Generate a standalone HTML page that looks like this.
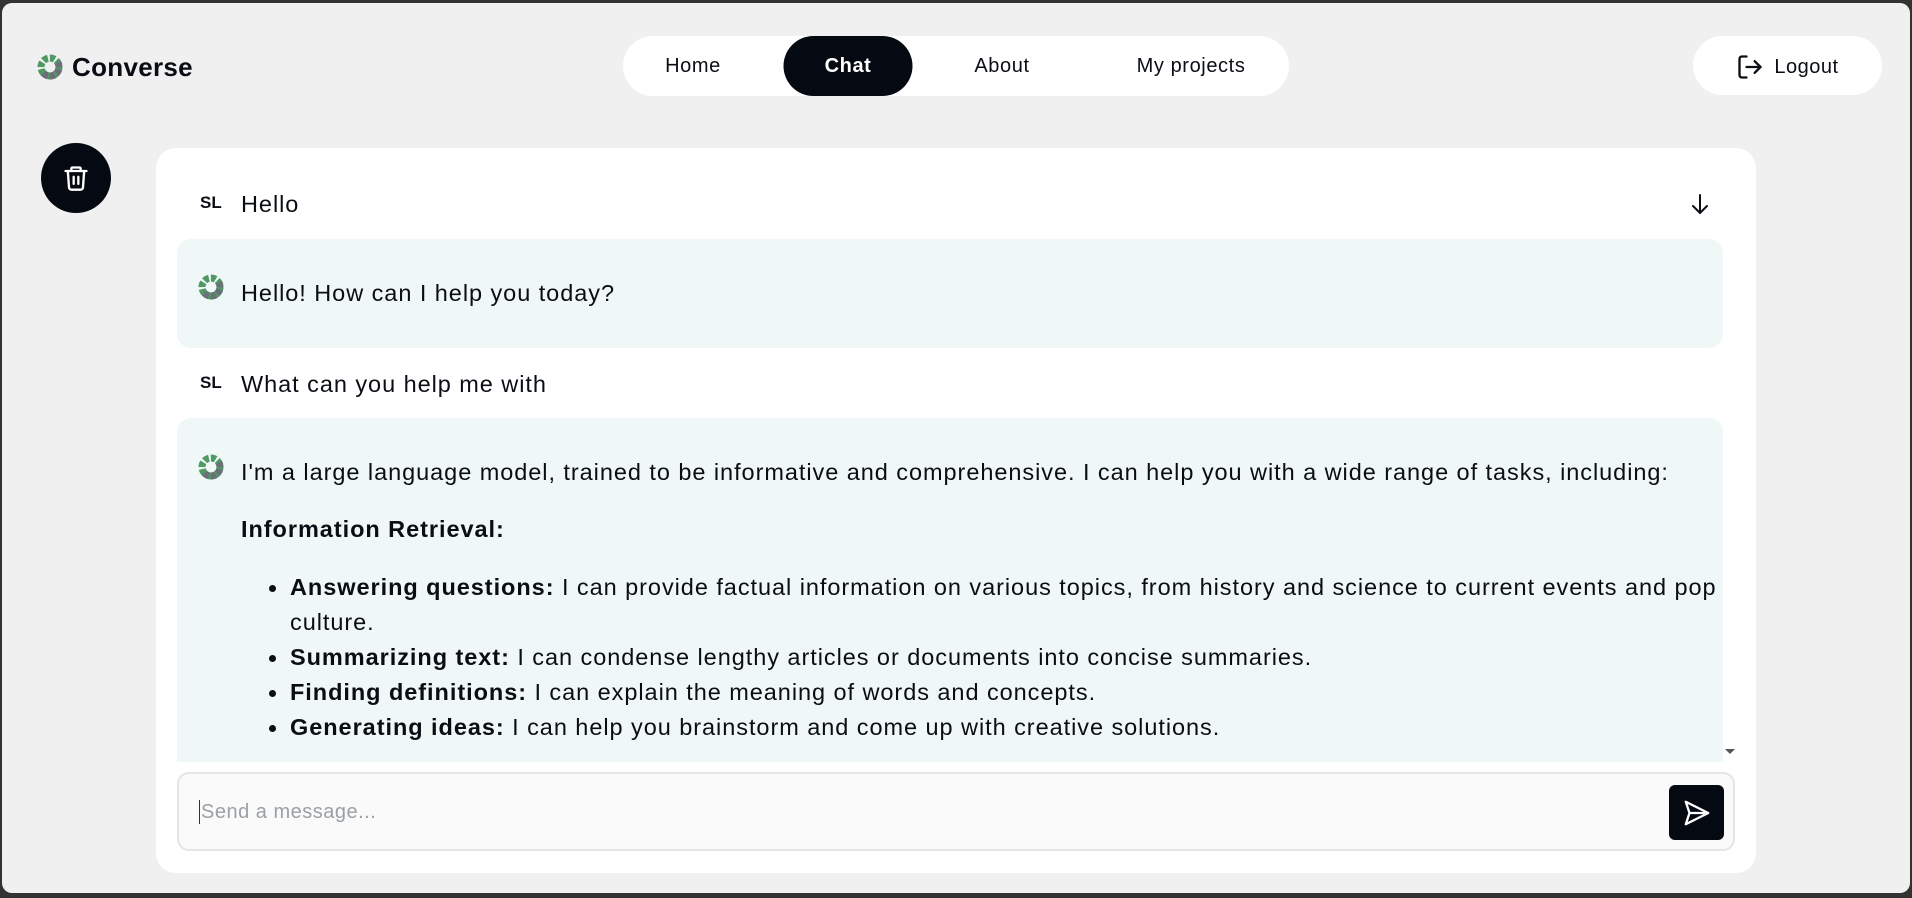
<!DOCTYPE html>
<html><head><meta charset="utf-8"><style>
*{box-sizing:border-box;margin:0;padding:0}
html,body{width:1912px;height:898px;overflow:hidden;background:#333}
body{font-family:"Liberation Sans",sans-serif;color:#0a0e14}
.frame{position:absolute;left:2px;top:3px;width:1908px;height:890px;background:#f0f0f0;border-radius:10px}
.logo{position:absolute;left:37px;top:52px;display:flex;align-items:center}
.logo span{font-weight:bold;font-size:26px;margin-left:8px;letter-spacing:0.3px}
.nav{position:absolute;left:623px;top:36px;width:666px;height:60px;background:#fff;border-radius:30px}
.nav div{position:absolute;top:0;height:60px;line-height:60px;font-size:20px;letter-spacing:0.6px;transform:translateX(-50%);white-space:nowrap}
.nav .act{background:#050a12;color:#fff;border-radius:30px;width:129px;text-align:center;font-weight:bold}
.logout{position:absolute;left:1693px;top:36px;width:189px;height:59px;background:#fff;border-radius:30px;display:flex;align-items:center;justify-content:center;font-size:20px;letter-spacing:0.5px;gap:10px;padding-top:3px}
.trash{position:absolute;left:41px;top:143px;width:70px;height:70px;border-radius:50%;background:#050a12;display:flex;align-items:center;justify-content:center}
.card{position:absolute;left:156px;top:148px;width:1600px;height:725px;background:#fff;border-radius:20px}
.msg{position:absolute;left:177px;width:1546px;font-size:23.5px;letter-spacing:0.95px}
.ai{background:#eff8f7;border-radius:14px}
.sl{position:absolute;left:23px;font-size:17px;font-weight:bold;letter-spacing:0}
.t{position:absolute;left:64px;white-space:nowrap}
.ico{position:absolute;left:21px}
ul{position:absolute;left:64px;list-style:none}
li{position:relative;padding-left:49px;line-height:35px;white-space:nowrap}
li:before{content:"";position:absolute;left:28px;top:15px;width:7px;height:7px;border-radius:50%;background:#0a0e14}
.input{position:absolute;left:177px;top:772px;width:1558px;height:79px;border:2px solid #e3e6e8;border-radius:12px;background:#fafafa}
.ph{position:absolute;left:20px;top:26px;font-size:20px;color:#9aa0a6;border-left:1.5px solid #333;padding-left:1px;line-height:24px;letter-spacing:0.5px}
.send{position:absolute;left:1669px;top:785px;width:55px;height:55px;background:#050a12;border-radius:6px;display:flex;align-items:center;justify-content:center}
</style></head><body>
<div class="frame"></div>
<svg width="0" height="0" style="position:absolute"><defs><g id="lg"><circle cx="13" cy="13" r="9" fill="none" stroke="#4f9a64" stroke-width="7" stroke-dasharray="5 2"/><path d="M13 4 A9 9 0 0 1 13 22" fill="none" stroke="#6b7078" stroke-width="7" stroke-dasharray="5 2" transform="rotate(60 13 13)"/></g></defs></svg>
<div class="logo"><svg width="27" height="27"><use href="#lg"/></svg><span>Converse</span></div>
<div class="nav">
<div style="left:70px">Home</div>
<div class="act" style="left:225px">Chat</div>
<div style="left:379px">About</div>
<div style="left:568px">My projects</div>
</div>
<div class="logout"><svg width="28" height="28" viewBox="0 0 24 24" fill="none" stroke="#0a0e14" stroke-width="2" stroke-linecap="round" stroke-linejoin="round"><path d="M9 21H5a2 2 0 0 1-2-2V5a2 2 0 0 1 2-2h4"/><path d="M16 17l5-5-5-5"/><path d="M21 12H9"/></svg>Logout</div>
<div class="trash"><svg width="28" height="30" viewBox="0 0 24 24" fill="none" stroke="#fff" stroke-width="2" stroke-linecap="round" stroke-linejoin="round"><path d="M3 6h18"/><path d="M8 6V4a1 1 0 0 1 1-1h6a1 1 0 0 1 1 1v2"/><path d="M5 6l1 14a2 2 0 0 0 2 2h8a2 2 0 0 0 2-2l1-14"/><path d="M10 11v6M14 11v6"/></svg></div>
<div class="card"></div>
<div class="msg" style="top:182px;height:46px"><div class="sl" style="top:11px">SL</div><div class="t" style="top:9px">Hello</div></div>
<svg style="position:absolute;left:1688px;top:192px" width="24" height="24" viewBox="0 0 24 24" fill="none" stroke="#0a0e14" stroke-width="2" stroke-linecap="round"><path d="M12 3v18M5 14l7 7 7-7"/></svg>
<div class="msg ai" style="top:239px;height:109px"><svg class="ico" style="top:35px" width="27" height="27"><use href="#lg"/></svg><div class="t" style="top:41px">Hello! How can I help you today?</div></div>
<div class="msg" style="top:362px;height:46px"><div class="sl" style="top:11px">SL</div><div class="t" style="top:9px">What can you help me with</div></div>
<div class="msg ai" style="top:418px;height:344px;border-radius:14px 14px 0 0;overflow:hidden">
<svg class="ico" style="top:36px" width="27" height="27"><use href="#lg"/></svg>
<div class="t" style="top:41px">I'm a large language model, trained to be informative and comprehensive. I can help you with a wide range of tasks, including:</div>
<div class="t" style="top:98px;font-weight:bold">Information Retrieval:</div>
<ul style="top:152px;left:64px">
<li style="padding-left:49px"><b>Answering questions:</b> I can provide factual information on various topics, from history and science to current events and pop<br>culture.</li>
<li><b>Summarizing text:</b> I can condense lengthy articles or documents into concise summaries.</li>
<li><b>Finding definitions:</b> I can explain the meaning of words and concepts.</li>
<li><b>Generating ideas:</b> I can help you brainstorm and come up with creative solutions.</li>
</ul></div>
<div style="position:absolute;left:1725px;top:749px;width:0;height:0;border-left:5px solid transparent;border-right:5px solid transparent;border-top:5px solid #555"></div>
<div class="input"><div class="ph">Send a message...</div></div>
<div class="send"><svg width="34" height="30" viewBox="0 0 24 24" fill="none" stroke="#fff" stroke-width="1.8" stroke-linejoin="round"><path d="M3 3l18 9-18 9 3-9z"/><path d="M6 12h15"/></svg></div>
</body></html>
